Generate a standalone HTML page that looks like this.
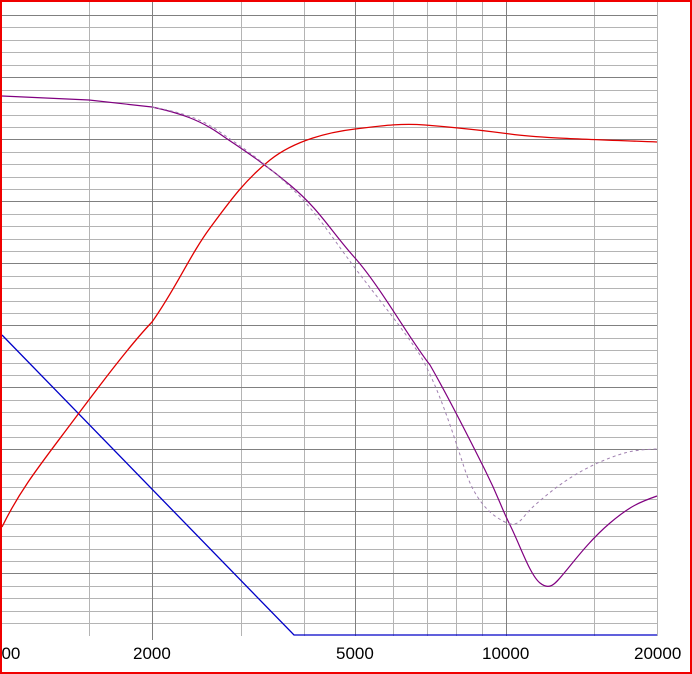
<!DOCTYPE html>
<html><head><meta charset="utf-8"><style>
html,body{margin:0;padding:0;background:#fff;width:692px;height:674px;overflow:hidden}
svg{display:block}
text{font-family:"Liberation Sans",sans-serif;font-size:17px;fill:#000}
</style></head><body>
<svg width="692" height="674" viewBox="0 0 692 674">
<rect x="0" y="0" width="692" height="674" fill="#fff"/>
<g stroke="#b4b4b4" stroke-width="1">
<path d="M2 27.5H657M2 40.5H657M2 52.5H657M2 65.5H657M2 90.5H657M2 102.5H657M2 115.5H657M2 127.5H657M2 152.5H657M2 164.5H657M2 177.5H657M2 189.5H657M2 214.5H657M2 226.5H657M2 239.5H657M2 251.5H657M2 276.5H657M2 288.5H657M2 301.5H657M2 313.5H657M2 338.5H657M2 350.5H657M2 363.5H657M2 375.5H657M2 400.5H657M2 412.5H657M2 425.5H657M2 437.5H657M2 462.5H657M2 474.5H657M2 487.5H657M2 499.5H657M2 524.5H657M2 536.5H657M2 549.5H657M2 561.5H657M2 586.5H657M2 598.5H657M2 611.5H657M2 623.5H657"/>
<path d="M89.5 2V636M241.5 2V636M304.5 2V636M393.5 2V636M427.5 2V636M456.5 2V636M482.5 2V636M594.5 2V636M657.5 2V636"/>
</g>
<g stroke="#808080" stroke-width="1">
<path d="M2 15.5H657M2 77.5H657M2 139.5H657M2 201.5H657M2 263.5H657M2 325.5H657M2 387.5H657M2 449.5H657M2 511.5H657M2 573.5H657"/>
<path d="M152.5 2V640M355.5 2V636M506.5 2V636"/>
</g>
<path d="M2 335L294 635H657" fill="none" stroke="#0000c8" stroke-width="1.3"/>
<path d="M2 527C20 490 40 465 70 425S130 345 152 322C175 290 190 255 210 228S245 180 270 160S330 132 355 129S400 123 425 125S480 130 510 134S580 139 657 142" fill="none" stroke="#e00000" stroke-width="1.3"/>
<path d="M2 96L89 100L152 107C180 113 200 120 220 134S260 160 290 185S330 230 355 258S410 340 430 365C450 400 470 440 485 470S500 505 510 525S530 575 540 583S555 584 565 572S590 540 610 523S640 502 657 496" fill="none" stroke="#800080" stroke-width="1.2"/>
<path d="M152 107C180 112 200 118 220 132S255 155 285 182S330 235 355 268S400 325 420 355C440 390 455 440 465 470S490 515 505 522S520 518 535 505S570 475 600 462S640 450 657 449" fill="none" stroke="#a080b0" stroke-width="1" stroke-dasharray="3,3"/>
<text x="-8" y="659">000</text>
<text x="133" y="659">2000</text>
<text x="336" y="659">5000</text>
<text x="482" y="659">10000</text>
<text x="634" y="659">20000</text>
<rect x="1" y="1" width="690" height="672" fill="none" stroke="#f00000" stroke-width="2"/>
</svg>
</body></html>
